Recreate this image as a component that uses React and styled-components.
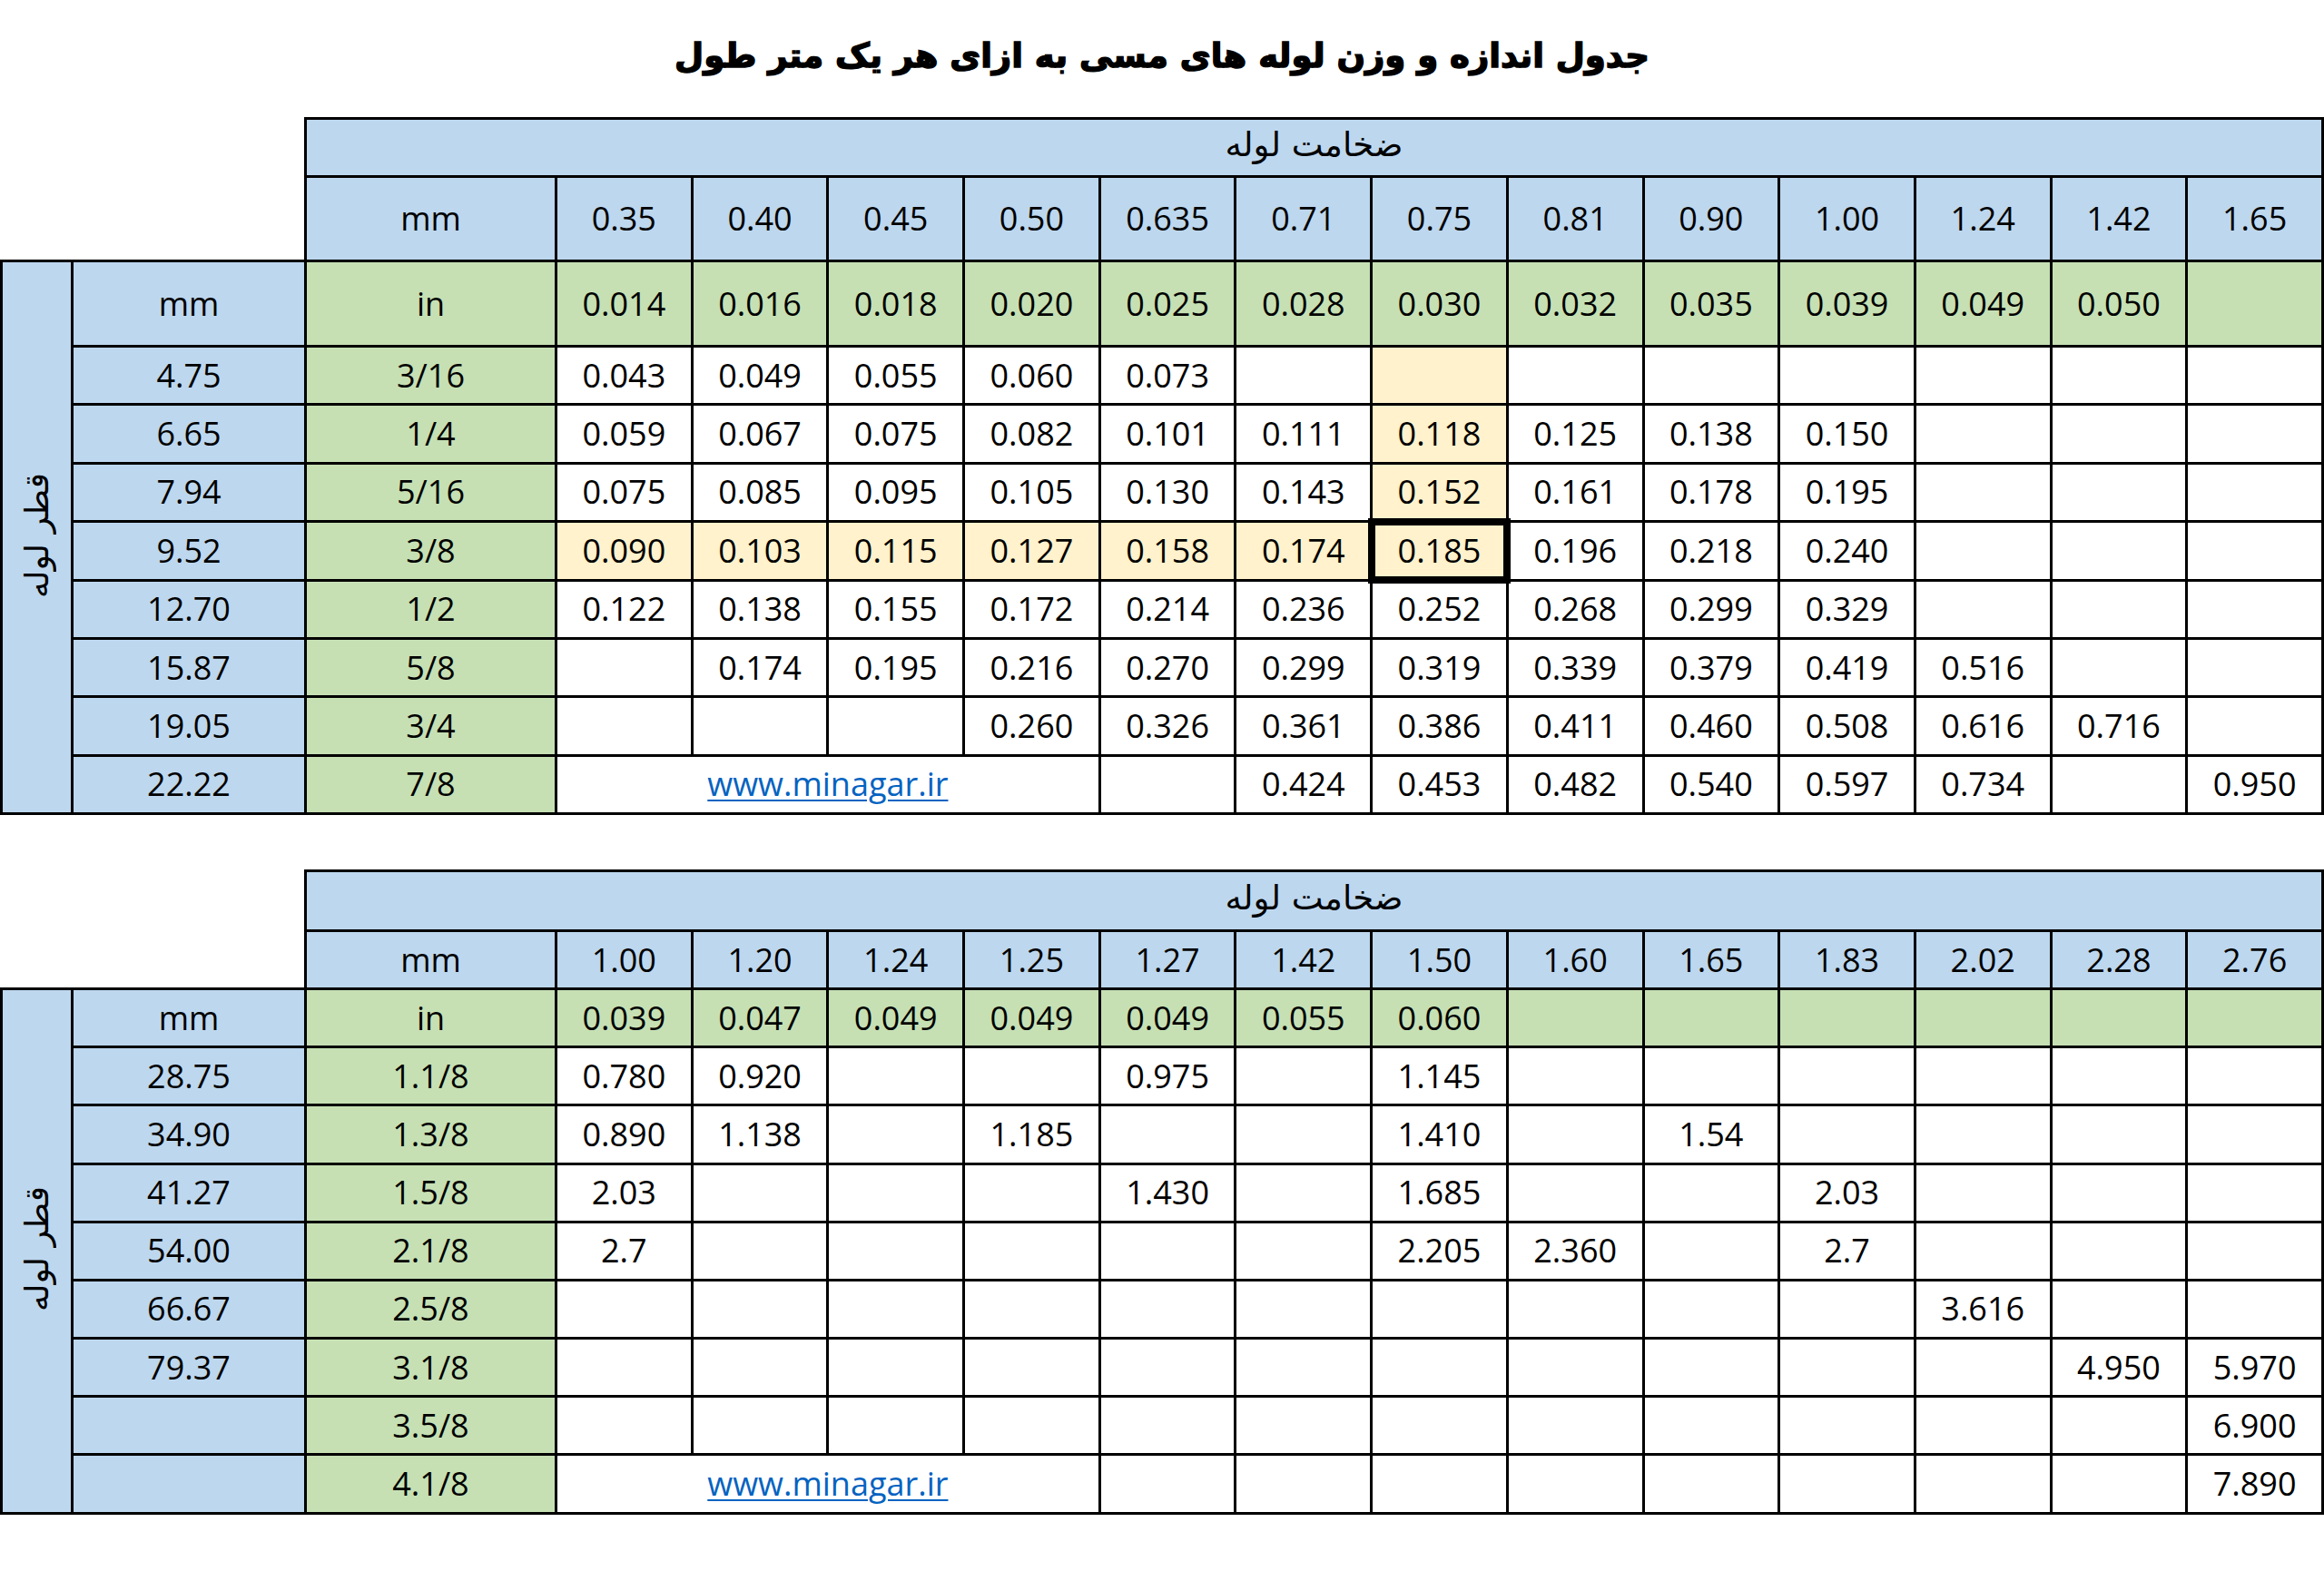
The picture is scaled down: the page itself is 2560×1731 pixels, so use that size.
import React from 'react'
import styled, { createGlobalStyle, css } from 'styled-components'

const GlobalStyle = createGlobalStyle`
  html, body {
    margin: 0;
    padding: 0;
    background: #fff;
  }
  body {
    font-family: "Open Sans", "DejaVu Sans", sans-serif;
    color: #000;
  }
`

const tones = {
  blue: '#bdd7ee',
  green: '#c6e0b4',
  yellow: '#fff2cc',
  white: '#ffffff'
}

const Page = styled.div`
  width: 2560px;
  display: flex;
  flex-direction: column;
`

const Title = styled.h1`
  margin: 0;
  height: 123px;
  padding-bottom: 6px;
  display: flex;
  align-items: center;
  justify-content: center;
  font-family: "DejaVu Sans", sans-serif;
  font-weight: 700;
  font-size: 37px;
  -webkit-text-stroke: 1.5px #000;
  direction: rtl;
`

const Sheet = styled.table`
  width: 2560px;
  border-collapse: collapse;
  table-layout: fixed;
  margin-top: ${p => p.$gap || 0}px;
`

const Col = styled.col`
  width: ${p => (p.$w ? p.$w + 'px' : 'auto')};
`

const Row = styled.tr`
  height: ${p => p.$h}px;
`

const Cell = styled.td`
  border: 3px solid #000;
  background: ${p => tones[p.$tone || 'white']};
  text-align: center;
  vertical-align: middle;
  padding: 0;
  font-size: 36px;
  line-height: 1;
  white-space: nowrap;
  ${p => p.$picked && css`
    position: relative;
    outline: 8px solid #000;
    outline-offset: -4px;
  `}
`

const Corner = styled.td`
  border: none;
  background: transparent;
  padding: 0;
`

const Persian = styled.span`
  display: inline-block;
  font-family: "DejaVu Sans", sans-serif;
  font-size: 37px;
  direction: rtl;
  transform: translateY(-3px);
`

const SideLabel = styled.span`
  display: inline-block;
  writing-mode: vertical-rl;
  transform: rotate(180deg);
  font-family: "DejaVu Sans", sans-serif;
  font-size: 36px;
  white-space: nowrap;
`

const SiteLink = styled.a`
  color: #0563c1;
  text-decoration: underline;
  text-underline-offset: 4px;
  text-decoration-thickness: 2px;
`

const split = s => s.split(' ').map(v => (v === '-' ? '' : v))

const first = {
  gap: 0,
  headH: [64, 93, 94],
  rowH: 64.4,
  heads: split('0.35 0.40 0.45 0.50 0.635 0.71 0.75 0.81 0.90 1.00 1.24 1.42 1.65'),
  inch: split('0.014 0.016 0.018 0.020 0.025 0.028 0.030 0.032 0.035 0.039 0.049 0.050 -'),
  rows: [
    ['4.75', '3/16', '0.043 0.049 0.055 0.060 0.073 - - - - - - - -'],
    ['6.65', '1/4', '0.059 0.067 0.075 0.082 0.101 0.111 0.118 0.125 0.138 0.150 - - -'],
    ['7.94', '5/16', '0.075 0.085 0.095 0.105 0.130 0.143 0.152 0.161 0.178 0.195 - - -'],
    ['9.52', '3/8', '0.090 0.103 0.115 0.127 0.158 0.174 0.185 0.196 0.218 0.240 - - -'],
    ['12.70', '1/2', '0.122 0.138 0.155 0.172 0.214 0.236 0.252 0.268 0.299 0.329 - - -'],
    ['15.87', '5/8', '- 0.174 0.195 0.216 0.270 0.299 0.319 0.339 0.379 0.419 0.516 - -'],
    ['19.05', '3/4', '- - - 0.260 0.326 0.361 0.386 0.411 0.460 0.508 0.616 0.716 -'],
    ['22.22', '7/8', 'LINK - 0.424 0.453 0.482 0.540 0.597 0.734 - 0.950']
  ],
  yellow: ['0:6', '1:6', '2:6', '3:0', '3:1', '3:2', '3:3', '3:4', '3:5', '3:6'],
  picked: '3:6'
}

const second = {
  gap: 60,
  headH: [66, 64, 64],
  rowH: 64.2,
  heads: split('1.00 1.20 1.24 1.25 1.27 1.42 1.50 1.60 1.65 1.83 2.02 2.28 2.76'),
  inch: split('0.039 0.047 0.049 0.049 0.049 0.055 0.060 - - - - - -'),
  rows: [
    ['28.75', '1.1/8', '0.780 0.920 - - 0.975 - 1.145 - - - - - -'],
    ['34.90', '1.3/8', '0.890 1.138 - 1.185 - - 1.410 - 1.54 - - - -'],
    ['41.27', '1.5/8', '2.03 - - - 1.430 - 1.685 - - 2.03 - - -'],
    ['54.00', '2.1/8', '2.7 - - - - - 2.205 2.360 - 2.7 - - -'],
    ['66.67', '2.5/8', '- - - - - - - - - - 3.616 - -'],
    ['79.37', '3.1/8', '- - - - - - - - - - - 4.950 5.970'],
    ['', '3.5/8', '- - - - - - - - - - - - 6.900'],
    ['', '4.1/8', 'LINK - - - - - - - - 7.890']
  ],
  yellow: [],
  picked: null
}

function ValueCells ({ values, r, table }) {
  const cells = []
  let c = 0
  values.forEach((v, i) => {
    if (v === 'LINK') {
      cells.push(
        <Cell key={i} colSpan={4}>
          <SiteLink href='#'>www.minagar.ir</SiteLink>
        </Cell>
      )
      c += 4
      return
    }
    const key = r + ':' + c
    cells.push(
      <Cell
        key={i}
        $tone={table.yellow.includes(key) ? 'yellow' : 'white'}
        $picked={table.picked === key}
      >
        {v}
      </Cell>
    )
    c += 1
  })
  return cells
}

function WeightTable ({ table }) {
  return (
    <Sheet $gap={table.gap}>
      <colgroup>
        <Col $w={78} />
        <Col $w={257} />
        <Col $w={276} />
        {table.heads.map((h, i) => <Col key={i} />)}
      </colgroup>
      <tbody>
        <Row $h={table.headH[0]}>
          <Corner colSpan={2} rowSpan={2} />
          <Cell colSpan={14} $tone='blue'>
            <Persian>ضخامت لوله</Persian>
          </Cell>
        </Row>
        <Row $h={table.headH[1]}>
          <Cell $tone='blue'>mm</Cell>
          {table.heads.map((h, i) => (
            <Cell key={i} $tone='blue'>{h}</Cell>
          ))}
        </Row>
        <Row $h={table.headH[2]}>
          <Cell rowSpan={table.rows.length + 1} $tone='blue'>
            <SideLabel>قطر لوله</SideLabel>
          </Cell>
          <Cell $tone='blue'>mm</Cell>
          <Cell $tone='green'>in</Cell>
          {table.inch.map((v, i) => (
            <Cell key={i} $tone='green'>{v}</Cell>
          ))}
        </Row>
        {table.rows.map(([mm, inch, vals], r) => (
          <Row key={r} $h={table.rowH}>
            <Cell $tone='blue'>{mm}</Cell>
            <Cell $tone='green'>{inch}</Cell>
            <ValueCells values={split(vals)} r={r} table={table} />
          </Row>
        ))}
      </tbody>
    </Sheet>
  )
}

export default function App () {
  return (
    <Page>
      <GlobalStyle />
      <Title>جدول اندازه و وزن لوله های مسی به ازای هر یک متر طول</Title>
      <WeightTable table={first} />
      <WeightTable table={second} />
    </Page>
  )
}
